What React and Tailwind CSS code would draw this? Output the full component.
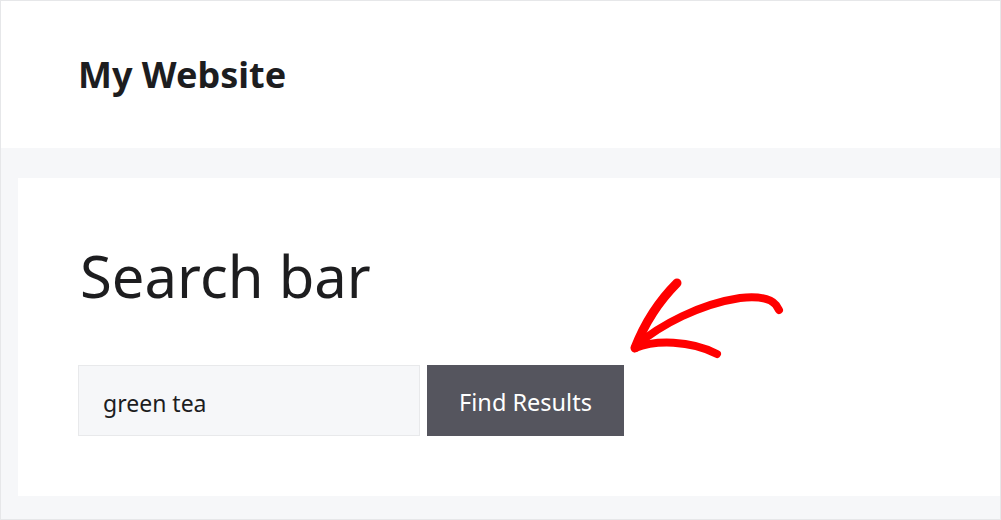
export default function App() {
  return (
    <div
      className="w-[1001px] h-[520px] border border-[#e6e7e9] bg-[#f6f7f9] flex flex-col overflow-hidden"
      style={{ fontFamily: '"Noto Sans", "Open Sans", sans-serif' }}
    >
      <header className="h-[147px] shrink-0 bg-white flex items-center pl-[77px]">
        <h1 className="text-[36px] font-bold text-[#1d1d1f] leading-none">My Website</h1>
      </header>

      <div className="pt-[30px] pl-[17px]">
        <section className="relative h-[318px] bg-white px-[60px] pt-[69px]">
          <h2 className="text-[58px] leading-none text-[#1d1d1f] font-normal ml-[2px]">Search bar</h2>

          <form className="mt-[60px] flex gap-[7px]" onSubmit={(e) => e.preventDefault()}>
            <input
              type="text"
              defaultValue="green tea"
              className="w-[342px] h-[71px] bg-[#f6f7f9] border border-[#e8e9eb] px-[24px] pt-[4px] text-[23px] text-[#1d1d1f] outline-none"
            />
            <button
              type="submit"
              className="w-[197px] h-[71px] bg-[#55555e] pt-[4px] text-white text-[23.5px]"
            >
              Find Results
            </button>
          </form>

          <svg
            className="absolute left-[582px] top-[82px]"
            width="200"
            height="110"
            viewBox="600 260 200 110"
            fill="none"
            stroke="#ff0000"
            strokeLinecap="round"
            strokeLinejoin="round"
          >
            <path d="M637 345 C 660 325, 700 304, 740 298 C 758 296, 770 298, 776 305 L 779 310" strokeWidth="8" />
            <path d="M635 348 C 642 330, 655 305, 677 283" strokeWidth="9" />
            <path d="M635 348 C 655 340, 690 340, 717 354" strokeWidth="8" />
          </svg>
        </section>
      </div>
    </div>
  );
}
